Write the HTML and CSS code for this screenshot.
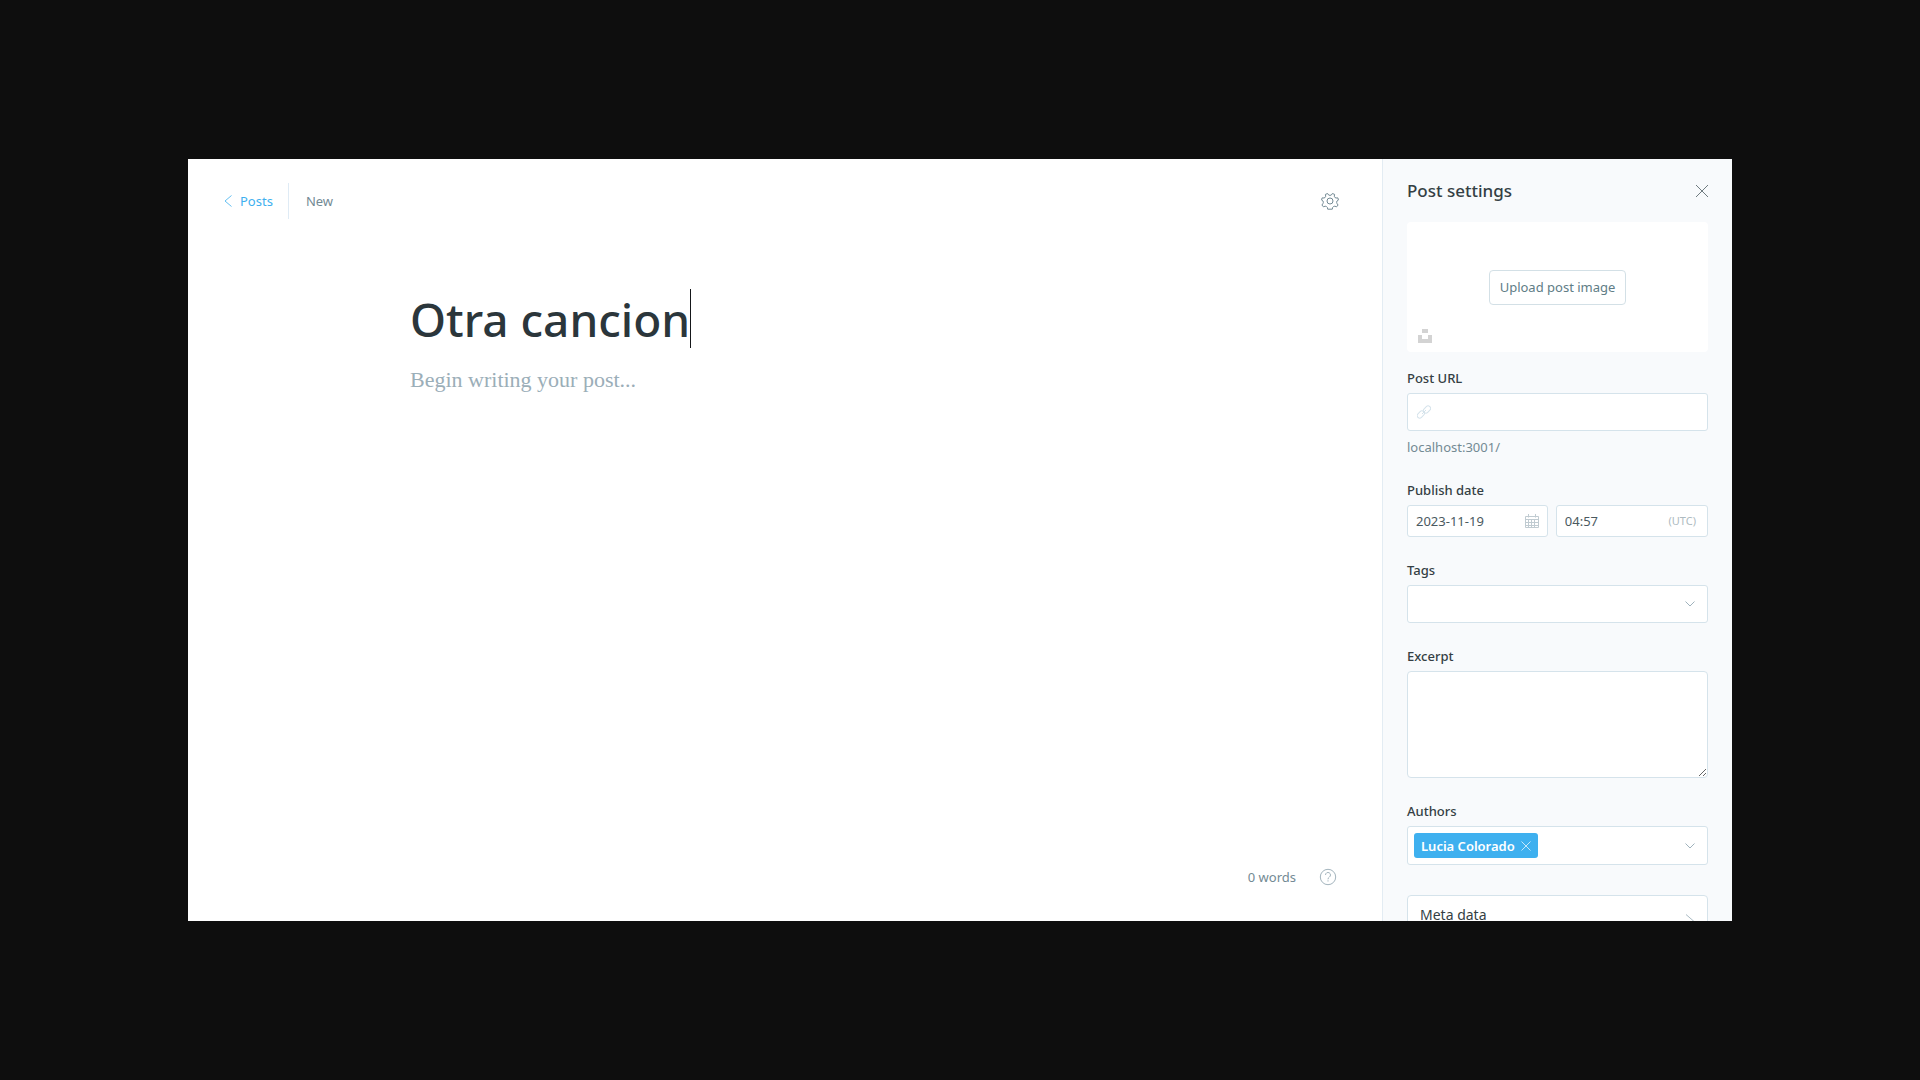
FILE: index.html
```html
<!DOCTYPE html>
<html lang="en">
<head>
<meta charset="utf-8">
<title>Post editor</title>
<link rel="stylesheet" href="styles.css">
</head>
<body>
<div class="app">
  <main class="editor">
    <header class="editor-header">
      <nav class="breadcrumb">
        <a class="back-link" href="#posts">
          <svg width="8" height="12" viewBox="0 0 8 12" fill="none" stroke="currentColor" stroke-width=".8"><path d="M7.500.5 1 6l6.500 5.500"/></svg>
          Posts
        </a>
        <span class="post-status">New</span>
      </nav>
      <button class="icon-button" type="button" aria-label="Settings">
        <svg width="18" height="18" viewBox="0 0 18 18" fill="none" stroke="currentColor" stroke-linejoin="round"><circle cx="9" cy="9" r="3"/><path d="M6.600 1.500 7.600 3Q9 3.800 10.400 3l1-1.500 2.200.9-.3 1.900q.3 1.400 1.700 1.700l1.900-.1.500 2.200-1.500 1q-.6 1.300.2 2.600l1 1.300-1.500 1.800-1.800-.6q-1.500 0-2.200 1.300l-.3 1.700H6.700l-.3-1.700q-.8-1.300-2.200-1.300l-1.800.6L.9 13l1-1.300q.8-1.300.2-2.600L.6 8.100l.5-2.200L3 6q1.400-.3 1.700-1.700l-.3-1.900z"/></svg>
      </button>
    </header>
    <section class="canvas">
      <div class="title-row">
        <input class="title-input" type="text" value="Otra cancion" aria-label="Post title">
        <span class="caret"></span>
      </div>
      <textarea class="body-input" placeholder="Begin writing your post..." aria-label="Post body"></textarea>
    </section>
    <footer class="editor-footer">
      <span>0 words</span>
      <button class="icon-button help" type="button" aria-label="Help">
        <svg width="18" height="18" viewBox="0 0 18 18" fill="none" stroke="currentColor"><circle cx="9" cy="9" r="7.700"/><path d="M6.500 7a2.500 2.500 0 1 1 3.800 2.100Q9 9.900 9 11.300M9 12.300v1.200"/></svg>
      </button>
    </footer>
  </main>

  <aside class="settings">
    <header class="settings-header">
      <h2>Post settings</h2>
      <button class="icon-button close" type="button" aria-label="Close">
        <svg width="12" height="12" viewBox="0 0 12 12" fill="none" stroke="currentColor"><path d="M0 0 12 12M12 0 0 12"/></svg>
      </button>
    </header>
    <div class="image-box">
      <button class="upload" type="button">Upload post image</button>
      <button class="icon-button unsplash" type="button" aria-label="Unsplash">
        <svg width="14" height="14" viewBox="0 0 14 14" fill="currentColor"><path d="M4 0h6v4H4zM0 6h4v4h6V6h4v8H0z"/></svg>
      </button>
    </div>
    <form class="fields">
      <div class="field">
        <label for="url">Post URL</label>
        <div class="control tall url">
          <svg class="link-icon" width="14" height="14" viewBox="0 0 14 14" fill="none" stroke="currentColor"><rect x="-.2" y="7" width="8" height="5" rx="2.500" transform="rotate(-45 3.800 9.500)"/><rect x="6" y="2" width="8" height="5" rx="2.500" transform="rotate(-45 10 4.500)"/><path d="M5 9 9 5"/></svg>
          <input id="url" type="text">
        </div>
        <p class="hint">localhost:3001/</p>
      </div>
      <div class="field">
        <label for="date">Publish date</label>
        <div class="date-row">
          <div class="control date">
            <input id="date" type="text" value="2023-11-19">
            <svg class="calendar-icon" width="14" height="14" viewBox="0 0 14 14" fill="none" stroke="currentColor"><path d="M.5 2.500h13v11H.5zM.5 5.500h13M3.500 0v3.500M10.500 0v3.500M3.500 5.500v8M6.500 5.500v8M9.500 5.500v8M1 8.500h12M1 11.500h12"/></svg>
          </div>
          <div class="control time">
            <input type="text" value="04:57" aria-label="Publish time">
            <span class="zone">(UTC)</span>
          </div>
        </div>
      </div>
      <div class="field">
        <label for="tags">Tags</label>
        <div class="control tall">
          <select id="tags"><option></option></select>
          <svg class="chevron" width="10" height="6" viewBox="0 0 10 6" fill="none" stroke="currentColor"><path d="M.5.5 5 5 9.500.5"/></svg>
        </div>
      </div>
      <div class="field">
        <label for="excerpt">Excerpt</label>
        <textarea id="excerpt" class="excerpt"></textarea>
      </div>
      <div class="field">
        <label for="authors">Authors</label>
        <div class="control tall authors">
          <span class="token">Lucia Colorado
            <button class="icon-button" type="button" aria-label="Remove Lucia Colorado">
              <svg width="10" height="10" viewBox="0 0 10 10" fill="none" stroke="currentColor"><path d="m.5.5 9 9m0-9-9 9"/></svg>
            </button>
          </span>
          <input id="authors" type="text">
          <svg class="chevron" width="10" height="6" viewBox="0 0 10 6" fill="none" stroke="currentColor"><path d="M.5.5 5 5 9.500.5"/></svg>
        </div>
      </div>
      <button class="meta-link" type="button">
        Meta data
        <svg width="8" height="14" viewBox="0 0 8 14" fill="none" stroke="currentColor"><path d="M0 .5 7.500 7 0 13.500"/></svg>
      </button>
    </form>
  </aside>
</div>
</body>
</html>
```
FILE: styles.css
```css
* {
  box-sizing: border-box;
}

body {
  margin: 0;
  height: 100vh;
  padding: 159px 188px;
  display: flex;
  background: #0e0e0e;
  color: #343f44;
  font: 13px/20px "Noto Sans", "Open Sans", sans-serif;
}

button,
input,
select,
textarea {
  margin: 0;
  padding: 0;
  border: 0;
  background: none;
  color: inherit;
  font: inherit;
  outline: 0;
}

svg {
  display: block;
  flex: none;
}

.app {
  flex: 1;
  display: flex;
  min-width: 0;
  overflow: hidden;
  background: #fff;
}

.icon-button {
  display: flex;
  color: #738a94;
}

/* Editor */
.editor {
  flex: 1;
  min-width: 0;
  display: flex;
  flex-direction: column;
}

.editor-header {
  display: flex;
  align-items: center;
  justify-content: space-between;
  padding: 24px 43px 0 36px;
}

.breadcrumb {
  display: flex;
  align-items: center;
  color: #738a94;
}

.back-link {
  display: flex;
  align-items: center;
  gap: 8px;
  height: 36px;
  padding-right: 15px;
  border-right: 1px solid #dfebf5;
  color: #3eb0ef;
  text-decoration: none;
}

.post-status {
  padding-left: 17px;
}

.canvas {
  flex: 1;
  width: 100%;
  max-width: 774px;
  margin: 0 auto;
  padding: 70px 12px 0;
  display: flex;
  flex-direction: column;
}

.title-row {
  display: flex;
  align-items: center;
}

.title-input {
  field-sizing: content;
  max-width: 100%;
  height: 59px;
  color: #2b363b;
  font-size: 46px;
  font-weight: 500;
}

.caret {
  width: 1px;
  height: 59px;
  background: #15171a;
}

.body-input {
  flex: 1;
  margin-top: 16px;
  resize: none;
  font: 22px/32px "Liberation Serif", serif;
}

.body-input::placeholder {
  color: #9baeb8;
}

.editor-footer {
  display: flex;
  align-items: center;
  justify-content: flex-end;
  gap: 23px;
  padding: 0 45px 34px;
  color: #738a94;
}

.help {
  color: #a3b4bd;
}

/* Settings panel */
.settings {
  flex: none;
  width: 350px;
  padding: 0 24px;
  border-left: 1px solid #e3ecf3;
  background: #f8fafc;
}

.settings-header {
  display: flex;
  align-items: center;
  justify-content: space-between;
  height: 63px;
}

.settings-header h2 {
  margin: 0;
  font-size: 17px;
  font-weight: 500;
}

.close {
  color: #6f7b80;
}

.image-box {
  position: relative;
  display: flex;
  align-items: center;
  justify-content: center;
  height: 130px;
  border-radius: 4px;
  background: #fff;
}

.upload {
  height: 35px;
  padding: 0 10px;
  border: 1px solid #d3e0e6;
  border-radius: 4px;
  color: #607d86;
}

.unsplash {
  position: absolute;
  left: 11px;
  bottom: 9px;
  color: #d3d3d3;
}

.fields {
  display: flex;
  flex-direction: column;
  gap: 23px;
  padding-top: 16px;
}

.field {
  display: flex;
  flex-direction: column;
  gap: 5px;
}

.field label {
  font-weight: 500;
}

.control {
  display: flex;
  align-items: center;
  gap: 8px;
  height: 32px;
  padding: 0 8px;
  border: 1px solid #d5e3eb;
  border-radius: 3px;
  background: #fff;
}

.control input,
.control select {
  flex: 1;
  width: 0;
  min-width: 0;
  align-self: stretch;
  color: #4a5960;
  appearance: none;
}

.tall {
  height: 38px;
  padding-right: 12px;
}

.url {
  padding-left: 9px;
}

.link-icon {
  color: #d5e3eb;
}

.calendar-icon {
  color: #c0cbd1;
}

.chevron {
  color: #9fb2bc;
}

.hint {
  margin: 1px 0 0;
  color: #738a94;
}

.date-row {
  display: flex;
  gap: 8px;
}

.date {
  flex: 140;
}

.time {
  flex: 153;
}

.zone {
  padding-right: 3px;
  color: #aebbc1;
  font-size: 11px;
}

.excerpt {
  height: 107px;
  border: 1px solid #d5e3eb;
  border-radius: 4px;
  background: #fff;
  resize: vertical;
}

.authors {
  height: 39px;
  padding-left: 6px;
}

.token {
  display: flex;
  align-items: center;
  gap: 6px;
  height: 25px;
  padding: 0 7px;
  border-radius: 3px;
  background: #3eb0ef;
  color: #fff;
  font-weight: 600;
}

.token .icon-button {
  color: #c5e7fa;
}

.meta-link {
  display: flex;
  align-items: flex-start;
  justify-content: space-between;
  height: 60px;
  margin-top: 7px;
  padding: 9px 13px 9px 12px;
  border: 1px solid #d5e3eb;
  border-radius: 4px;
  background: #fff;
  font-size: 14px;
}

.meta-link svg {
  margin-top: 9px;
  color: #a9bac3;
}
```
